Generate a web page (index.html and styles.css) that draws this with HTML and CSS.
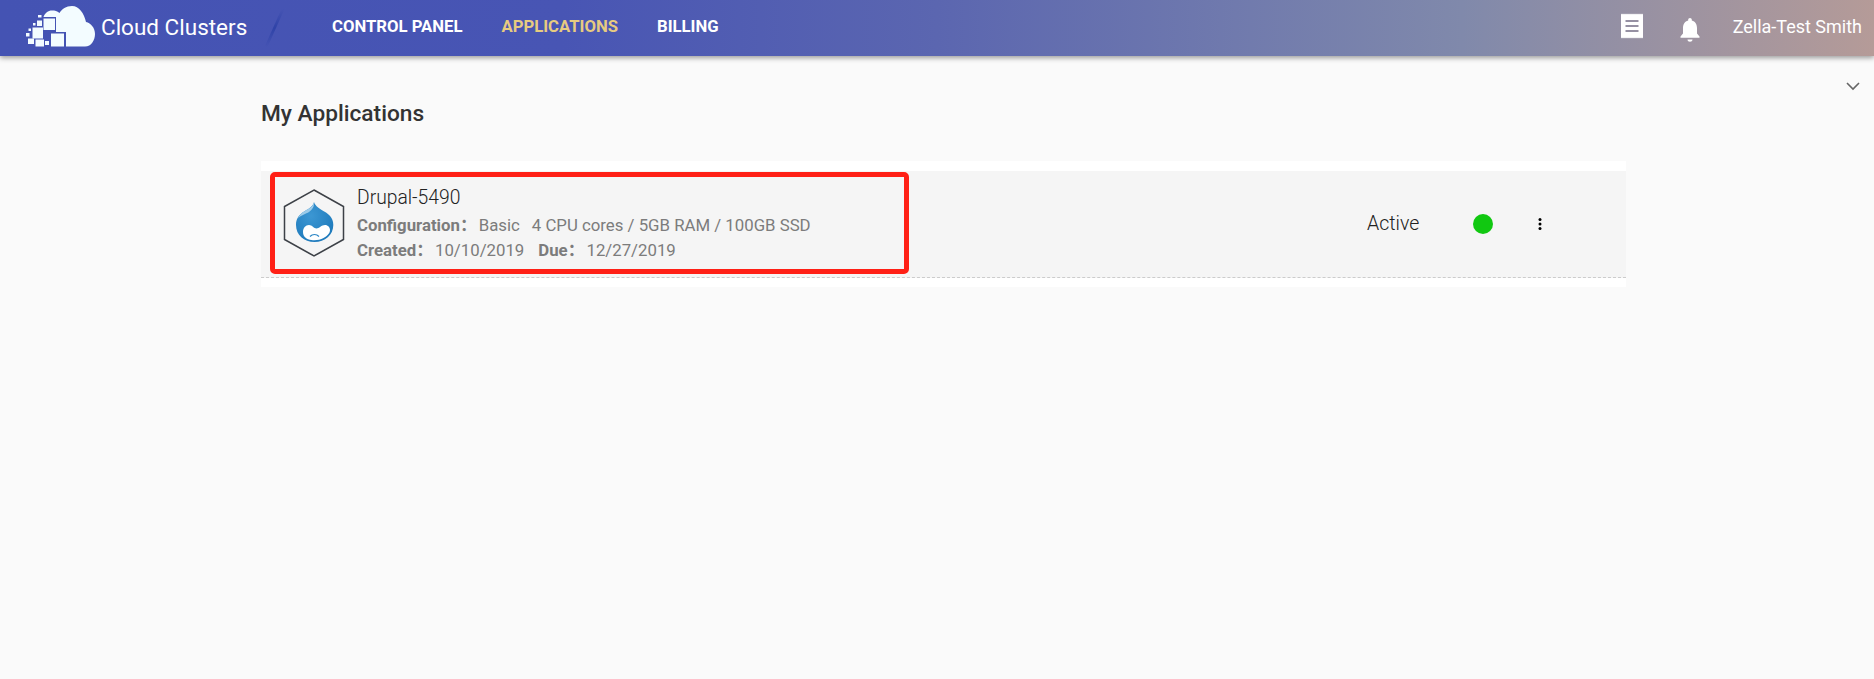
FILE: index.html
```html
<!DOCTYPE html>
<html lang="en">
<head>
<meta charset="utf-8">
<title>Cloud Clusters</title>
<link rel="stylesheet" href="styles.css">
</head>
<body>
<header class="topbar">
  <div class="brand">
    <svg class="brand-logo" width="72" height="56" viewBox="0 0 72 56">
      <g fill="#f3fcff">
        <path d="M41 46.500H60C66.500 46.500 70 40 70 34 70 28 66 23 61 22 59 13 54 6 47 6 41 6 37 9 34.500 13 32 11 30 10.500 27 10.500 23 10.500 20 13 18.500 17H31V32H41Z"/>
        <rect x="18.500" y="18.500" width="11.500" height="11.500"/>
        <rect x="7.500" y="27.500" width="10.500" height="11"/>
        <rect x="26" y="33.500" width="13" height="13"/>
        <rect x="10.500" y="39.500" width="8.500" height="7"/>
        <rect x="3" y="38.500" width="6" height="5.500"/>
        <rect x="20" y="41" width="4" height="4"/>
        <rect x="1" y="33" width="3.500" height="3.500"/>
        <rect x="3.500" y="28.500" width="2.500" height="2.500"/>
        <rect x="12" y="20.500" width="5" height="5.500"/>
        <rect x="13" y="15" width="3.500" height="2.500"/>
        <rect x="8" y="23" width="2.500" height="2.500"/>
      </g>
    </svg>
    <span class="brand-name">Cloud Clusters</span>
    <span class="slash"></span>
  </div>
  <nav class="nav">
    <a class="nav-link">CONTROL PANEL</a>
    <a class="nav-link nav-active">APPLICATIONS</a>
    <a class="nav-link">BILLING</a>
  </nav>
  <div class="tools">
    <svg class="tool-icon" width="24" height="26" viewBox="0 0 24 26"><path fill="#fff" fill-rule="evenodd" d="M1 .5l1 1 1-1 1 1 1-1 1 1 1-1 1 1 1-1 1 1 1-1 1 1 1-1 1 1 1-1 1 1 1-1 1 1 1-1 1 1 1-1 1 1 1-1V25.500l-1-1-1 1-1-1-1 1-1-1-1 1-1-1-1 1-1-1-1 1-1-1-1 1-1-1-1 1-1-1-1 1-1-1-1 1-1-1-1 1-1-1-1 1zM5.500 7V9h13V7zM5.500 12v2h13v-2zM5.500 17v2h13v-2z"/></svg>
    <svg class="tool-icon bell" width="24" height="28" viewBox="0 0 24 28"><path fill="#fff" d="M12 3c1 0 1.800.8 1.800 1.800v.7c3.500.9 5.200 4 5.200 7.500v5.500l2.500 3v1.200h-19v-1.200l2.500-3V13c0-3.500 1.700-6.600 5.200-7.500v-.7C10.200 3.800 11 3 12 3zM9.500 24.500h5c0 1.300-1.100 2.300-2.500 2.300s-2.500-1-2.500-2.300z"/></svg>
    <span class="user">Zella-Test Smith</span>
  </div>
</header>
<main class="content">
  <div class="chevron-row">
    <svg width="16" height="10" viewBox="0 0 16 10"><path d="M2 2l6 6 6-6" fill="none" stroke="#666" stroke-width="1.600"/></svg>
  </div>
  <h1 class="title">My Applications</h1>
  <section class="card">
    <div class="row">
      <div class="app">
        <svg class="app-icon" width="62" height="68" viewBox="0 0 62 68">
          <defs>
            <radialGradient id="drop" cx=".4" cy=".35" r=".75">
              <stop offset="0" stop-color="#3c97d3"/>
              <stop offset="1" stop-color="#1c78ba"/>
            </radialGradient>
          </defs>
          <path d="M31 1L60.500 17.500V50.500L31 67 1.500 50.500V17.500z" fill="none" stroke="#3d4147" stroke-width="1.500"/>
          <path d="M31 13C32 17 37 20 43 23.500 47.500 26.500 50.300 30 50.300 36 50.300 46 42 53 31.500 53 21 53 13 46 13 36 13 30 15.500 26.500 19.500 23.500 25 20 30 18 31 13Z" fill="url(#drop)"/>
          <path d="M31 13.500C30 18 25 20 19.500 23.500 17.500 25 16 27 15 29.500 18 26 23 25 26 23 29.500 20.500 31.500 17 31 13.500Z" fill="#9ccbe9"/>
          <path d="M20 43C20 39 22.500 36 26 36 29 36 31 39.500 33.500 39.500 36 39.500 38.500 36 42 36 45 36 47 38.500 47 41 47 44.500 44 47 40.500 49 37 51 32.500 51.500 28.500 51 23.500 50.300 20 48 20 43Z" fill="#fff"/>
          <path d="M27 47.500C29.500 44.800 33.500 44.800 36 47.500" fill="none" stroke="#2a85c5" stroke-width="1.200"/>
        </svg>
        <div class="app-info">
          <div class="app-name">Drupal-5490</div>
          <div class="app-line"><b>Configuration：</b><span class="value">Basic</span><span class="value spec">4 CPU cores / 5GB RAM / 100GB SSD</span></div>
          <div class="app-line"><b>Created：</b><span class="value">10/10/2019</span><b class="due">Due：</b><span class="value">12/27/2019</span></div>
        </div>
      </div>
      <div class="status">Active</div>
      <span class="dot"></span>
      <svg class="more" width="4" height="14" viewBox="0 0 4 14"><circle cx="2" cy="2.500" r="1.500"/><circle cx="2" cy="7" r="1.500"/><circle cx="2" cy="11.500" r="1.500"/></svg>
      <div class="highlight"></div>
    </div>
  </section>
</main>
</body>
</html>
```

FILE: styles.css
```css
html, body {
  margin: 0;
  padding: 0;
  height: 100%;
}
body {
  background: #fafafa;
  font-family: Roboto, "Noto Sans CJK SC", "Liberation Sans", sans-serif;
  color: #333;
  overflow: hidden;
}
.topbar {
  height: 56px;
  display: flex;
  align-items: center;
  background: linear-gradient(90deg, #4453b3 0%, #4855b4 30%, #5b66b0 50%, #8089ab 78%, #b59b98 100%);
  box-shadow: 0 2px 5px rgba(0, 0, 0, .38);
  color: #fff;
  position: relative;
}
.brand {
  display: flex;
  align-items: center;
  width: 332px;
  flex: none;
  padding-left: 25px;
  box-sizing: border-box;
}
.brand-logo {
  flex: none;
}
.brand-name {
  font-size: 22.500px;
  margin-left: 4px;
  margin-top: -2px;
  white-space: nowrap;
}
.slash {
  width: 3px;
  height: 38px;
  margin-left: 26px;
  background: linear-gradient(180deg, rgba(50, 70, 170, 0), #2f43a8 50%, rgba(50, 70, 170, 0));
  transform: skewX(-24deg);
}
.nav {
  display: flex;
  gap: 39px;
  font-size: 16.700px;
  font-weight: 700;
  margin-top: -3px;
}
.nav-link {
  white-space: nowrap;
}
.nav-active {
  color: #e7cb80;
}
.tools {
  margin-left: auto;
  display: flex;
  align-items: center;
  padding-right: 12px;
  margin-top: -4px;
}
.tool-icon {
  flex: none;
  display: block;
}
.bell {
  margin-left: 34px;
  margin-top: 6px;
}
.user {
  font-size: 18px;
  margin-left: 31px;
  white-space: nowrap;
}
.content {
  padding: 0 248px 0 261px;
  position: relative;
}
.chevron-row {
  position: absolute;
  top: 25px;
  right: 13px;
  line-height: 0;
}
.title {
  margin: 0;
  padding-top: 46px;
  font-size: 22.700px;
  line-height: 24px;
  font-weight: 500;
  color: #333;
}
.card {
  margin-top: 35px;
  background: #fff;
  padding: 10px 0 9px;
  height: 126px;
  box-sizing: border-box;
}
.row {
  position: relative;
  display: flex;
  align-items: center;
  height: 107px;
  background: #f5f5f5;
  border-bottom: 1px dashed #ccc;
  box-sizing: border-box;
}
.app {
  display: flex;
  align-items: center;
  width: 1106px;
  flex: none;
  padding-left: 22px;
  box-sizing: border-box;
}
.app-icon {
  flex: none;
  margin-top: -2px;
}
.app-info {
  margin-left: 12px;
  margin-top: -3px;
}
.app-name {
  font-size: 19.300px;
  line-height: 30px;
  font-weight: 300;
  color: #222;
}
.app-line {
  font-size: 16.800px;
  line-height: 25px;
  color: #7c7c7c;
  white-space: nowrap;
}
.app-line b {
  font-weight: 700;
}
.value {
  margin-left: 2px;
}
.spec {
  margin-left: 12px;
}
.due {
  margin-left: 14px;
}
.status {
  width: 106px;
  flex: none;
  font-size: 19.500px;
  font-weight: 300;
  color: #222;
  margin-top: -2px;
}
.dot {
  width: 20px;
  height: 20px;
  border-radius: 50%;
  background: #11c811;
  flex: none;
}
.more {
  margin-left: 45px;
  flex: none;
}
.highlight {
  position: absolute;
  left: 9px;
  top: 1px;
  width: 639px;
  height: 102px;
  border: 5px solid #ff2016;
  border-radius: 5px;
  box-sizing: border-box;
}
```
